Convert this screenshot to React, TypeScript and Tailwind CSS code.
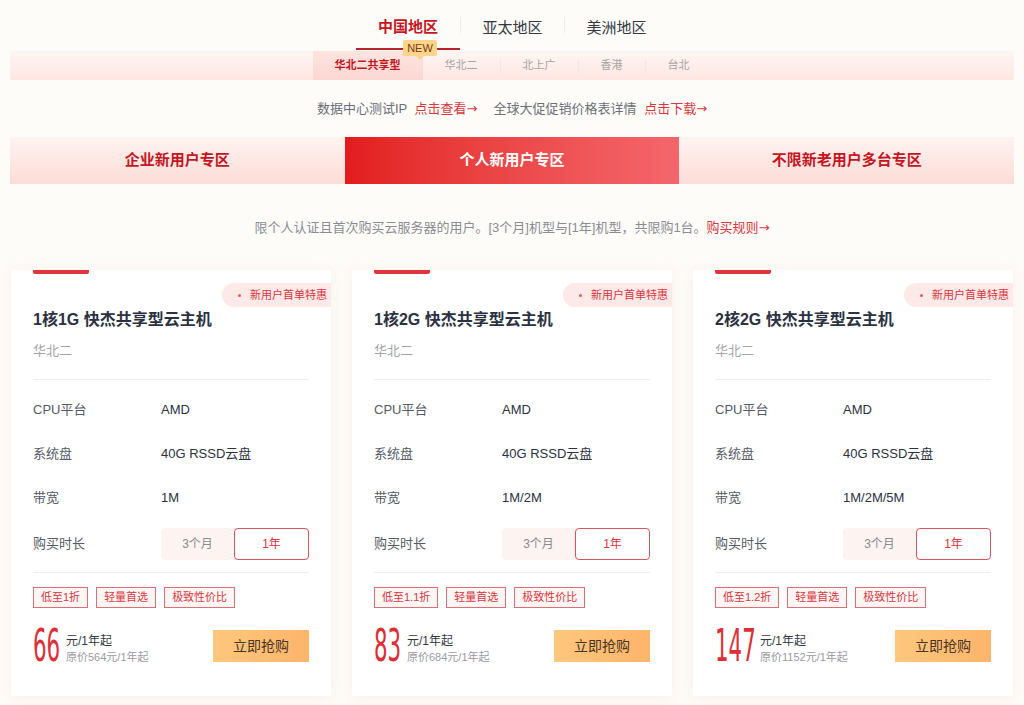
import { useState } from 'react';

const regions = ['中国地区', '亚太地区', '美洲地区'];
const zones = ['华北二共享型', '华北二', '北上广', '香港', '台北'];
const areas = ['企业新用户专区', '个人新用户专区', '不限新老用户多台专区'];

const plans = [
  { title: '1核1G 快杰共享型云主机', bw: '1M', tags: ['低至1折', '轻量首选', '极致性价比'], price: '66', orig: '原价564元/1年起', w: 'w-[30px]' },
  { title: '1核2G 快杰共享型云主机', bw: '1M/2M', tags: ['低至1.1折', '轻量首选', '极致性价比'], price: '83', orig: '原价684元/1年起', w: 'w-[30px]' },
  { title: '2核2G 快杰共享型云主机', bw: '1M/2M/5M', tags: ['低至1.2折', '轻量首选', '极致性价比'], price: '147', orig: '原价1152元/1年起', w: 'w-[42px]' },
];

function PlanCard({ plan }: { plan: (typeof plans)[number] }) {
  const [term, setTerm] = useState<'3m' | '1y'>('1y');
  const specs = [
    ['CPU平台', 'AMD'],
    ['系统盘', '40G RSSD云盘'],
    ['带宽', plan.bw],
  ];

  return (
    <div className="relative overflow-hidden bg-white px-[22px] pb-[31px] shadow-[0_2px_12px_rgba(210,160,140,0.14)]">
      <div className="h-[4px] w-[56px] rounded-b-[2px] bg-[#e0353b]" />
      <div className="absolute right-0 top-[13px] flex h-[24px] items-center gap-[9px] rounded-l-full bg-[#fde9e7] pl-[16px] pr-[4px] text-[11px] text-[#d9363e]">
        <span className="h-[3px] w-[3px] rounded-full bg-[#e05a60]" />
        新用户首单特惠
      </div>

      <h3 className="mt-[34px] text-[16px] font-semibold leading-[24px] text-[#2c3142]">{plan.title}</h3>
      <div className="mt-[9px] text-[13px] leading-[20px] text-[#a3a3a8]">华北二</div>
      <div className="mt-[18px] h-px bg-[#f0ecea]" />

      <div className="mt-[8px]">
        {specs.map(([k, v]) => (
          <div key={k} className="flex h-[44px] items-center text-[13px] text-[#2c3142]">
            <span className="w-[128px] text-[#555a66]">{k}</span>
            <span>{v}</span>
          </div>
        ))}
        <div className="flex h-[48px] items-center text-[13px]">
          <span className="w-[128px] text-[#555a66]">购买时长</span>
          <div className="flex h-[32px] w-[148px] rounded-[4px] bg-[#fdf3f1] text-[12px]">
            <button
              onClick={() => setTerm('3m')}
              className={
                term === '3m'
                  ? 'w-[73px] rounded-[4px] border border-[#d9545c] bg-white text-[#d9363e]'
                  : 'w-[73px] text-[#8a8a92]'
              }
            >
              3个月
            </button>
            <button
              onClick={() => setTerm('1y')}
              className={
                term === '1y'
                  ? 'flex-1 rounded-[4px] border border-[#d9545c] bg-white text-[#d9363e]'
                  : 'flex-1 text-[#8a8a92]'
              }
            >
              1年
            </button>
          </div>
        </div>
      </div>

      <div className="mt-[4px] h-px bg-[#f0ecea]" />

      <div className="mt-[14px] flex gap-[8px]">
        {plan.tags.map((t) => (
          <span key={t} className="flex h-[21px] items-center border border-[#dc7076] bg-[#fdf6f4] px-[7px] text-[11px] text-[#d9363e]">
            {t}
          </span>
        ))}
      </div>

      <div className="mt-[19px] flex items-center justify-between">
        <div className="flex items-center">
          <div className={`${plan.w} h-[34px]`}>
            <span className="inline-block origin-left scale-x-[0.54] font-['DejaVu_Sans_Condensed',sans-serif] text-[44px] leading-[34px] text-[#dc2f37]">
              {plan.price}
            </span>
          </div>
          <div className="ml-[3px] flex flex-col pt-[6px]">
            <span className="text-[12px] leading-[16px] text-[#333843]">元/1年起</span>
            <span className="text-[11px] leading-[16px] text-[#9a9aa2]">{plan.orig}</span>
          </div>
        </div>
        <button className="h-[32px] w-[96px] bg-gradient-to-r from-[#fdc77d] to-[#fdb56b] text-[14px] text-[#4a3320]">
          立即抢购
        </button>
      </div>
    </div>
  );
}

export default function App() {
  const [region, setRegion] = useState(0);
  const [zone, setZone] = useState(0);
  const [area, setArea] = useState(1);

  return (
    <div className="min-h-[705px] bg-[#fefcf8] font-['Liberation_Sans','Noto_Sans_CJK_SC',sans-serif]">
      {/* region tabs */}
      <div className="flex justify-center">
        {regions.map((r, i) => (
          <div key={r} className="flex items-center">
            {i > 0 && <div className="h-[16px] w-px bg-[#f0ebe6]" />}
            <button
              onClick={() => setRegion(i)}
              className={
                i === region
                  ? 'relative flex h-[50px] w-[104px] items-center justify-center border-b-2 border-[#b8232a] pt-[6px] text-[15px] font-bold text-[#c3161f]'
                  : 'relative flex h-[50px] w-[103px] items-center justify-center pt-[6px] text-[15px] text-[#333843]'
              }
            >
              {r}
              {i === 0 && (
                <span className="absolute left-[47px] top-[40px] z-10 flex h-[16px] w-[34px] items-center justify-center rounded-[2px] bg-[#fcd48c] text-[11px] font-normal leading-none text-[#7a3d12]">
                  NEW
                  <span className="absolute -bottom-[4px] left-[13px] h-0 w-0 border-x-[4px] border-t-[4px] border-x-transparent border-t-[#fcd48c]" />
                </span>
              )}
            </button>
          </div>
        ))}
      </div>

      {/* zone sub tabs */}
      <div className="mx-[10px] mt-px flex h-[29px] justify-center bg-gradient-to-b from-[#fef6f3] to-[#fde6e2]">
        {zones.map((z, i) => (
          <div key={z} className="flex items-center">
            {i > 1 && <div className="h-[14px] w-px bg-[#f6e4e0]" />}
            <button
              onClick={() => setZone(i)}
              className={
                i === zone
                  ? 'h-full bg-gradient-to-b from-[#fde4e0] to-[#fbd7d2] px-[22px] text-[11px] font-bold text-[#c3161f]'
                  : 'h-full px-[22px] text-[11px] text-[#a7a3a3]'
              }
            >
              {z}
            </button>
          </div>
        ))}
      </div>

      {/* links */}
      <div className="mt-[19px] flex h-[20px] items-center justify-center gap-[16px] text-[13px] text-[#6b6e78]">
        <span>
          数据中心测试IP <span className="ml-[4px] text-[#d9363e]">点击查看<span className="font-['DejaVu_Sans',sans-serif]">→</span></span>
        </span>
        <span>
          全球大促促销价格表详情 <span className="ml-[4px] text-[#d9363e]">点击下载<span className="font-['DejaVu_Sans',sans-serif]">→</span></span>
        </span>
      </div>

      {/* area tabs */}
      <div className="mx-[10px] mt-[18px] grid h-[47px] grid-cols-3">
        {areas.map((a, i) => (
          <button
            key={a}
            onClick={() => setArea(i)}
            className={
              i === area
                ? 'bg-gradient-to-r from-[#e31b1d] to-[#f4666c] text-[15px] font-bold text-white'
                : 'bg-gradient-to-b from-[#fef3f0] to-[#fcdcd8] text-[15px] font-bold text-[#c3161f]'
            }
          >
            {a}
          </button>
        ))}
      </div>

      <p className="mt-[34px] text-center text-[13px] leading-[20px] text-[#8a8c94]">
        限个人认证且首次购买云服务器的用户。[3个月]机型与[1年]机型，共限购1台。
        <span className="text-[#d9363e]">购买规则<span className="font-['DejaVu_Sans',sans-serif]">→</span></span>
      </p>

      {/* plans */}
      <div className="mt-[32px] grid grid-cols-3 gap-[21px] px-[11px]">
        {plans.map((p) => (
          <PlanCard key={p.title} plan={p} />
        ))}
      </div>
    </div>
  );
}
